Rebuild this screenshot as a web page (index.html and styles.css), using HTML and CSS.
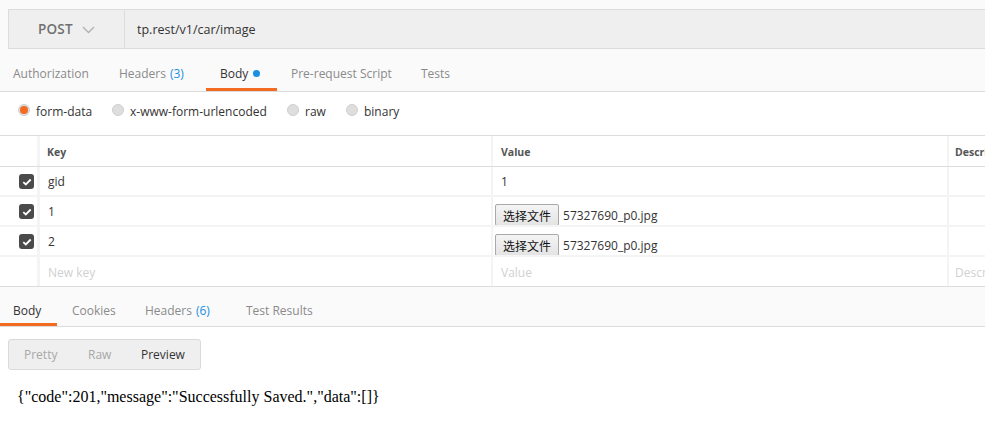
FILE: index.html
```html
<!DOCTYPE html>
<html>
<head>
<meta charset="utf-8">
<link rel="stylesheet" href="styles.css">
</head>
<body>
<div class="page">
  <div class="top">
    <div class="urlbar">
      <div class="method">
        <span class="method-name">POST</span>
        <svg class="chev" width="13" height="8" viewBox="0 0 13 8"><path d="M1 1 L6.5 6.5 L12 1" fill="none" stroke="#b0b0b0" stroke-width="1.3"/></svg>
      </div>
      <div class="url">tp.rest/v1/car/image</div>
    </div>
  </div>

  <div class="tabs req-tabs">
    <div class="tab">Authorization</div>
    <div class="tab">Headers <span class="count">(3)</span></div>
    <div class="tab active">Body <span class="dot"></span></div>
    <div class="tab">Pre-request Script</div>
    <div class="tab">Tests</div>
  </div>

  <div class="radios">
    <label class="radio"><span class="rb on"></span>form-data</label>
    <label class="radio"><span class="rb"></span>x-www-form-urlencoded</label>
    <label class="radio"><span class="rb"></span>raw</label>
    <label class="radio"><span class="rb"></span>binary</label>
  </div>

  <div class="table">
    <div class="row head">
      <div class="c chk"></div>
      <div class="c key">Key</div>
      <div class="c val">Value</div>
      <div class="c desc">Description</div>
    </div>
    <div class="row">
      <div class="c chk"><span class="cb"><svg width="10" height="8" viewBox="0 0 10 8"><path d="M1.3 4.2 L3.8 6.5 L8.7 1.5" fill="none" stroke="#fff" stroke-width="1.8"/></svg></span></div>
      <div class="c key">gid</div>
      <div class="c val">1</div>
      <div class="c desc"></div>
    </div>
    <div class="row">
      <div class="c chk"><span class="cb"><svg width="10" height="8" viewBox="0 0 10 8"><path d="M1.3 4.2 L3.8 6.5 L8.7 1.5" fill="none" stroke="#fff" stroke-width="1.8"/></svg></span></div>
      <div class="c key">1</div>
      <div class="c val file"><span class="filebtn">选择文件</span><span class="fname">57327690_p0.jpg</span></div>
      <div class="c desc"></div>
    </div>
    <div class="row">
      <div class="c chk"><span class="cb"><svg width="10" height="8" viewBox="0 0 10 8"><path d="M1.3 4.2 L3.8 6.5 L8.7 1.5" fill="none" stroke="#fff" stroke-width="1.8"/></svg></span></div>
      <div class="c key">2</div>
      <div class="c val file"><span class="filebtn">选择文件</span><span class="fname">57327690_p0.jpg</span></div>
      <div class="c desc"></div>
    </div>
    <div class="row last">
      <div class="c chk"></div>
      <div class="c key ph">New key</div>
      <div class="c val ph">Value</div>
      <div class="c desc ph">Description</div>
    </div>
  </div>

  <div class="tabs res-tabs">
    <div class="tab active">Body</div>
    <div class="tab">Cookies</div>
    <div class="tab">Headers <span class="count">(6)</span></div>
    <div class="tab">Test Results</div>
  </div>

  <div class="response">
    <div class="seg">
      <span class="seg-item">Pretty</span>
      <span class="seg-item">Raw</span>
      <span class="seg-item sel">Preview</span>
    </div>
    <div class="json">{"code":201,"message":"Successfully Saved.","data":[]}</div>
  </div>
</div>
</body>
</html>
```

FILE: styles.css
```css
* { box-sizing: border-box; }
html, body { margin: 0; padding: 0; }
body {
  width: 985px;
  height: 428px;
  overflow: hidden;
  background: #fff;
  font-family: "Open Sans", "Noto Sans", sans-serif;
  color: #333;
}
.page { width: 985px; overflow: hidden; }

.top {
  background: #fafafa;
  padding: 9px 0 0 8px;
}
.urlbar {
  display: flex;
  height: 40px;
  width: 1000px;
  background: #efefef;
  border: 1px solid #dcdcdc;
  border-right: none;
}
.method {
  width: 116px;
  flex-shrink: 0;
  border-right: 1px solid #dcdcdc;
  display: flex;
  align-items: center;
  padding-left: 29px;
  gap: 9px;
}
.method-name {
  font-size: 13.5px;
  font-weight: 600;
  color: #707070;
  letter-spacing: 0.2px;
}
.chev { margin-top: 1px; }
.url {
  display: flex;
  align-items: center;
  padding-left: 12px;
  font-size: 12.5px;
  color: #333;
}

.tabs {
  display: flex;
  background: #fafafa;
  border-bottom: 1px solid #dcdcdc;
}
.req-tabs { height: 43px; }
.tab {
  position: relative;
  display: flex;
  align-items: center;
  flex-shrink: 0;
  white-space: nowrap;
  font-size: 12px;
  color: #8a8a8a;
}
.req-tabs .tab { padding: 7px 0 0 13px; }
.req-tabs .tab:nth-child(1) { width: 106px; }
.req-tabs .tab:nth-child(2) { width: 100px; }
.req-tabs .tab:nth-child(3) { width: 71px; padding-left: 14px; }
.req-tabs .tab:nth-child(4) { width: 131px; padding-left: 14px; }
.tab.active { color: #333; }
.tab.active::after {
  content: "";
  position: absolute;
  left: 0; right: 0; bottom: 0;
  height: 3px;
  background: #f26b21;
}
.count { color: #1a8fe3; margin-left: 4px; }
.dot {
  display: inline-block;
  width: 7px; height: 7px;
  border-radius: 50%;
  background: #1a8fe3;
  margin-left: 5px;
}

.radios {
  height: 44px;
  background: #fff;
  border-bottom: 1px solid #dcdcdc;
  display: flex;
  align-items: center;
  padding: 0 0 4px 18px;
}
.radio {
  display: flex;
  align-items: center;
  flex-shrink: 0;
  white-space: nowrap;
  font-size: 12px;
  color: #333;
}
.radio:nth-child(1) { width: 94px; }
.radio:nth-child(2) { width: 175px; }
.radio:nth-child(3) { width: 59px; }
.rb {
  width: 12px; height: 12px;
  border-radius: 50%;
  background: #dedede;
  border: 1px solid #cfcfcf;
  margin-right: 6px;
  margin-top: -4px;
  position: relative;
}
.rb.on::after {
  content: "";
  position: absolute;
  left: 1px; top: 1px;
  width: 8px; height: 8px;
  border-radius: 50%;
  background: #f26b21;
}

.table {
  background: #fff;
  border-bottom: 1px solid #dcdcdc;
}
.row {
  display: flex;
  height: 30px;
  border-bottom: 2px solid #f4f4f4;
}
.row.head {
  height: 31px;
  border-bottom: 1px solid #dcdcdc;
}
.row.last { border-bottom: none; height: 29px; }
.c {
  display: flex;
  align-items: center;
  flex-shrink: 0;
  font-size: 12px;
  color: #333;
  white-space: nowrap;
  overflow: hidden;
  padding-top: 1px;
}
.chk {
  width: 40px;
  justify-content: flex-end;
  border-right: 3px solid #f4f4f4;
}
.key { width: 453px; padding-left: 8px; border-right: 2px solid #f4f4f4; }
.val { width: 456px; padding-left: 8px; border-right: 2px solid #f4f4f4; }
.desc { width: 100px; padding-left: 6px; }
.head .c { font-size: 10.5px; font-weight: 700; color: #555; }
.head .key { padding-left: 7px; }
.ph { color: #d0d0d0; }
.cb {
  width: 15px; height: 15px;
  border-radius: 3px;
  background: #4a4a4a;
  display: flex;
  align-items: center;
  justify-content: center;
  margin-right: 3px;
}
.val.file { padding-left: 2px; padding-top: 0; align-items: flex-end; }
.filebtn {
  font-family: "Noto Sans CJK SC", sans-serif;
  font-size: 12px;
  color: #111;
  background: linear-gradient(#f4f4f4, #e4e4e4);
  border: 1px solid #a9a9a9;
  border-radius: 2px;
  height: 22px;
  padding: 0 7px;
  display: flex;
  align-items: center;
  margin-bottom: -1px;
}
.fname { font-size: 12px; color: #333; margin-left: 4px; padding-bottom: 1px; }

.res-tabs { height: 40px; background: #fafafa; }
.res-tabs .tab { padding: 8px 0 0 13px; }
.res-tabs .tab:nth-child(1) { width: 57px; }
.res-tabs .tab:nth-child(2) { width: 73px; padding-left: 15px; }
.res-tabs .tab:nth-child(3) { width: 101px; padding-left: 15px; }
.res-tabs .tab:nth-child(4) { padding-left: 15px; }

.response {
  background: #fff;
  padding: 12px 0 0 8px;
  height: 101px;
}
.seg {
  display: flex;
  align-items: center;
  width: 193px;
  height: 31px;
  background: #efefef;
  border: 1px solid #dadada;
  border-radius: 3px;
  font-size: 12px;
  padding-left: 15px;
}
.seg-item { color: #a8a8a8; }
.seg-item:nth-child(1) { width: 64px; }
.seg-item:nth-child(2) { width: 53px; }
.seg-item.sel { color: #333; }
.json {
  font-family: "Liberation Serif", "Times New Roman", serif;
  font-size: 16px;
  color: #000;
  margin-top: 18px;
  padding-left: 9px;
}
```
